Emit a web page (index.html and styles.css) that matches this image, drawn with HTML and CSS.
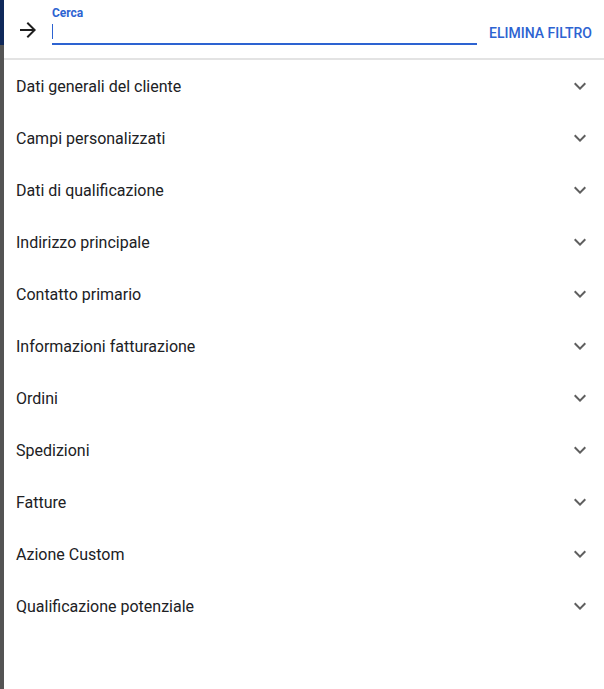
FILE: index.html
```html
<!DOCTYPE html>
<html lang="it">
<head>
<meta charset="utf-8">
<title>Filtro</title>
<link rel="stylesheet" href="styles.css">
</head>
<body>
<div class="page">
  <div class="backdrop"><div class="backdrop-top"></div></div>
  <div class="panel">
    <div class="search-bar">
      <svg class="back-icon" viewBox="0 0 24 24" width="24" height="24"><path d="M12 4l-1.41 1.41L16.17 11H4v2h12.17l-5.58 5.59L12 20l8-8z"/></svg>
      <label class="field">
        <span class="field-label">Cerca</span>
        <span class="field-input"><span class="caret"></span></span>
      </label>
      <button class="clear-btn">ELIMINA FILTRO</button>
    </div>
    <ul class="sections">
      <li class="section"><span>Dati generali del cliente</span><svg class="chev" viewBox="0 0 24 24"><path d="M16.59 8.59L12 13.17 7.41 8.59 6 10l6 6 6-6z"/></svg></li>
      <li class="section"><span>Campi personalizzati</span><svg class="chev" viewBox="0 0 24 24"><path d="M16.59 8.59L12 13.17 7.41 8.59 6 10l6 6 6-6z"/></svg></li>
      <li class="section"><span>Dati di qualificazione</span><svg class="chev" viewBox="0 0 24 24"><path d="M16.59 8.59L12 13.17 7.41 8.59 6 10l6 6 6-6z"/></svg></li>
      <li class="section"><span>Indirizzo principale</span><svg class="chev" viewBox="0 0 24 24"><path d="M16.59 8.59L12 13.17 7.41 8.59 6 10l6 6 6-6z"/></svg></li>
      <li class="section"><span>Contatto primario</span><svg class="chev" viewBox="0 0 24 24"><path d="M16.59 8.59L12 13.17 7.41 8.59 6 10l6 6 6-6z"/></svg></li>
      <li class="section"><span>Informazioni fatturazione</span><svg class="chev" viewBox="0 0 24 24"><path d="M16.59 8.59L12 13.17 7.41 8.59 6 10l6 6 6-6z"/></svg></li>
      <li class="section"><span>Ordini</span><svg class="chev" viewBox="0 0 24 24"><path d="M16.59 8.59L12 13.17 7.41 8.59 6 10l6 6 6-6z"/></svg></li>
      <li class="section"><span>Spedizioni</span><svg class="chev" viewBox="0 0 24 24"><path d="M16.59 8.59L12 13.17 7.41 8.59 6 10l6 6 6-6z"/></svg></li>
      <li class="section"><span>Fatture</span><svg class="chev" viewBox="0 0 24 24"><path d="M16.59 8.59L12 13.17 7.41 8.59 6 10l6 6 6-6z"/></svg></li>
      <li class="section"><span>Azione Custom</span><svg class="chev" viewBox="0 0 24 24"><path d="M16.59 8.59L12 13.17 7.41 8.59 6 10l6 6 6-6z"/></svg></li>
      <li class="section"><span>Qualificazione potenziale</span><svg class="chev" viewBox="0 0 24 24"><path d="M16.59 8.59L12 13.17 7.41 8.59 6 10l6 6 6-6z"/></svg></li>
    </ul>
  </div>
</div>
</body>
</html>
```

FILE: styles.css
```css
* { box-sizing: border-box; }
html, body { margin: 0; height: 100%; }
body {
  font-family: Roboto, "Liberation Sans", Arial, sans-serif;
  background: #fff;
  color: #202124;
}
.page {
  display: flex;
  height: 689px;
}
.backdrop {
  width: 4px;
  flex: none;
  background: #545454;
}
.backdrop-top {
  height: 45px;
  background: #10295a;
}
.panel {
  flex: 1;
  background: #fff;
  display: flex;
  flex-direction: column;
}
.search-bar {
  height: 60px;
  border-bottom: 2px solid #e3e3e3;
  display: flex;
  align-items: flex-start;
  padding: 0 12px 0 12px;
}
.back-icon {
  margin-top: 18px;
  flex: none;
  fill: #1f1f1f;
}
.field {
  margin-left: 12px;
  width: 425px;
  display: flex;
  flex-direction: column;
}
.field-label {
  margin-top: 6px;
  font-size: 12px;
  font-weight: 700;
  line-height: 14px;
  color: #2d63d1;
}
.field-input {
  margin-top: 2px;
  height: 23px;
  border-bottom: 2px solid #2d63d1;
  display: flex;
  align-items: flex-start;
}
.caret {
  margin-top: 2px;
  width: 1px;
  height: 15px;
  background: #2d63d1;
}
.clear-btn {
  margin-left: 12px;
  margin-top: 25px;
  padding: 0;
  border: 0;
  background: none;
  font-family: Roboto, "Liberation Sans", Arial, sans-serif;
  font-size: 14px;
  font-weight: 500;
  line-height: 16px;
  color: #2d63d1;
  letter-spacing: 0;
  white-space: nowrap;
}
.sections {
  list-style: none;
  margin: 0;
  padding: 0;
}
.section {
  height: 52px;
  display: flex;
  align-items: center;
  justify-content: space-between;
  padding: 0 12px 0 12px;
  font-size: 16px;
  color: #202124;
}
.chev {
  width: 24px;
  height: 24px;
  fill: #5f5f5f;
  flex: none;
}
```
